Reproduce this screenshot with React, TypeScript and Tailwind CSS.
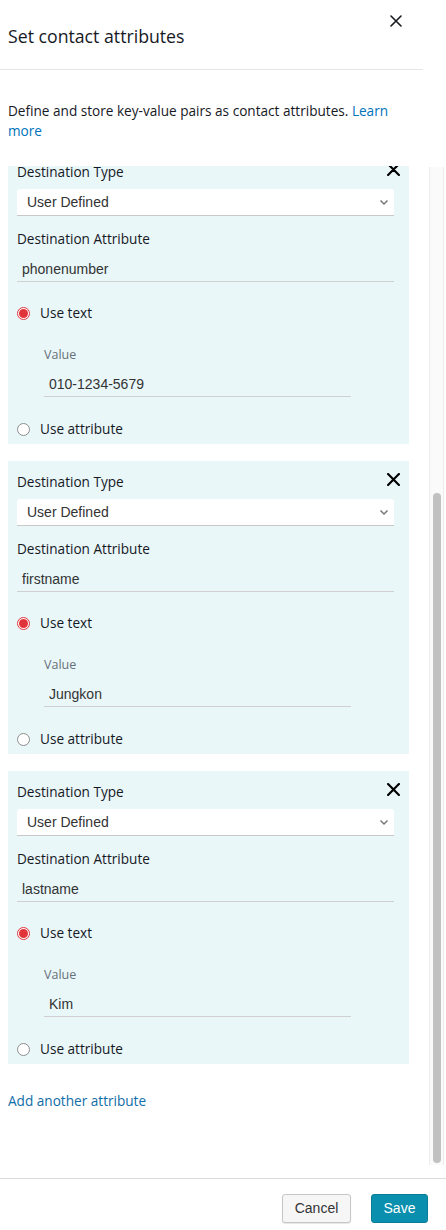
import React from "react";

const ember = { fontFamily: '"Open Sans", "Noto Sans", sans-serif' };
const helv = { fontFamily: '"Liberation Sans", Arial, sans-serif' };

function XIcon({ size = 12, stroke = 2, color = "#000" }: { size?: number; stroke?: number; color?: string }) {
  return (
    <svg width={size} height={size} viewBox="0 0 12 12" fill="none">
      <path d="M1 1 L11 11 M11 1 L1 11" stroke={color} strokeWidth={stroke} strokeLinecap="round" />
    </svg>
  );
}

function Radio({ checked }: { checked: boolean }) {
  if (checked) {
    return (
      <span className="flex h-[13px] w-[13px] items-center justify-center rounded-full border border-[#e0343a] bg-white">
        <span className="h-[9px] w-[9px] rounded-full bg-[#e0343a]" />
      </span>
    );
  }
  return <span className="h-[13px] w-[13px] rounded-full border border-[#8d8d8d] bg-white" />;
}

function Card({ attr, value }: { attr: string; value: string }) {
  return (
    <div className="flex h-[293px] w-[401px] flex-col bg-[#e9f7f9] pl-[9px] pr-[9px] pt-[9px]">
      <div className="flex h-[24px] items-center justify-between">
        <span className="text-[13.6px] text-[#16191f]" style={ember}>Destination Type</span>
        <span className="-mt-[6px]"><XIcon size={13} stroke={2} /></span>
      </div>
      <div className="mt-[5px] mr-[6px] flex h-[27px] items-center justify-between rounded-t-[3px] border-b border-[#c8c8c8] bg-white pl-[10px] pr-[5px]">
        <span className="text-[14px] text-[#333]" style={helv}>User Defined</span>
        <svg width="10" height="7" viewBox="0 0 10 7" fill="none">
          <path d="M1.5 1.5 L5 5 L8.5 1.5" stroke="#777" strokeWidth="1.5" />
        </svg>
      </div>
      <div className="mt-[13px] flex h-[20px] items-center text-[13.6px] text-[#16191f]" style={ember}>Destination Attribute</div>
      <div className="mt-[8px] mr-[6px] flex h-[25px] items-center border-b border-[#d0d0d0] pl-[5px] text-[14px] text-[#333]" style={helv}>
        {attr}
      </div>
      <div className="mt-[21px] flex h-[20px] items-center gap-[10px]">
        <Radio checked />
        <span className="text-[13.6px] text-[#16191f]" style={ember}>Use text</span>
      </div>
      <div className="mt-[22px] flex h-[20px] items-center pl-[27px] text-[12.5px] text-[#687078]" style={ember}>Value</div>
      <div className="mt-[8px] ml-[27px] flex h-[24px] w-[307px] items-center border-b border-[#d0d0d0] pl-[5px] text-[14px] text-[#333]" style={helv}>
        {value}
      </div>
      <div className="mt-[22px] flex h-[20px] items-center gap-[10px]">
        <Radio checked={false} />
        <span className="text-[13.6px] text-[#16191f]" style={ember}>Use attribute</span>
      </div>
    </div>
  );
}

export default function App() {
  return (
    <div className="flex h-[1230px] w-[446px] flex-col bg-white" style={ember}>
      <div className="flex h-[70px] w-[423px] items-start justify-between border-b border-[#e6e6e6]">
        <h1 className="mt-[23px] pl-[8px] text-[17.7px] leading-[26px] text-[#16191f]">Set contact attributes</h1>
        <span className="mt-[15px] mr-[21px]"><XIcon size={12} stroke={1.6} color="#16191f" /></span>
      </div>
      <p className="mt-[31px] w-[423px] pl-[8px] text-[13.6px] leading-[20px] text-[#16191f]">
        Define and store key-value pairs as contact attributes.{" "}
        <span className="text-[#0073bb]">Learn<br />more</span>
      </p>
      <div className="mt-[25px] flex h-[1000px]">
        <div className="h-[1000px] w-[429px] overflow-hidden">
          <div className="-mt-[15px] flex flex-col gap-[17px] pl-[8px]">
            <Card attr="phonenumber" value="010-1234-5679" />
            <Card attr="firstname" value="Jungkon" />
            <Card attr="lastname" value="Kim" />
          </div>
          <div className="mt-[27px] flex h-[20px] items-center pl-[8px] text-[13.6px] font-medium text-[#0f6da8]">
            Add another attribute
          </div>
        </div>
        <div className="mt-[1px] h-[998px] w-[15px] border-l border-r border-[#ececec] bg-[#fafafa] pl-[3px] pt-[326px]">
          <div className="h-[670px] w-[8px] rounded-full bg-[#c1c1c1]" />
        </div>
      </div>
      <div className="mt-[12px] flex justify-end gap-[20px] border-t border-[#dcdcdc] pr-[18px] pt-[15px]">
        <button className="h-[29px] w-[69px] rounded-[3px] border border-[#c6c6c6] bg-[#f6f6f6] text-[14px] text-[#333] shadow-[0_1px_1px_rgba(0,0,0,0.1)]" style={helv}>
          Cancel
        </button>
        <button className="h-[29px] w-[57px] rounded-[3px] border border-[#0a7d98] bg-[#0a8fae] text-[14px] text-white" style={helv}>
          Save
        </button>
      </div>
    </div>
  );
}
